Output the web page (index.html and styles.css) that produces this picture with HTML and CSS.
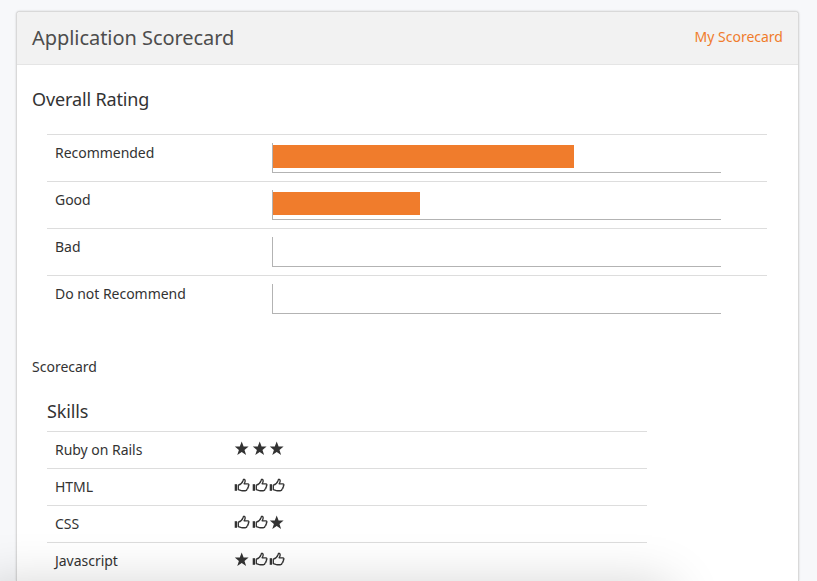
FILE: index.html
```html
<!DOCTYPE html>
<html lang="en">
<head>
<meta charset="utf-8">
<title>Application Scorecard</title>
<link rel="stylesheet" href="styles.css">
</head>
<body>
<svg width="0" height="0" class="defs">
  <symbol id="star" viewBox="0 0 16 16"><path d="M7.7.6l1.9 5h5l-4.1 3.3 1.6 5.1-4.4-3-4.4 3 1.6-5.1L.8 5.6h5z" fill="#333"/></symbol>
  <symbol id="thumb" viewBox="0 0 16 16"><path d="M.7 6.2h2.3v6.6H.7z" fill="#333"/><path d="M4.3 7.1C6.6 6.5 8.4 4.6 9 2.7c.2-1 .6-1.5 1.3-1.4 1.3.3 1.1 2.6-.2 4.5h3.5c1.6 0 1.6 1.7.7 2.1.5.5.2 1.3-.5 1.6.3.7-.1 1.4-.8 1.6 0 1-.7 1.6-1.7 1.6H8.4c-1.6 0-2.6-.7-4.1-1z" fill="none" stroke="#333" stroke-width="1.35" stroke-linejoin="round"/></symbol>
</svg>
<main class="card">
  <header class="card-header"><h1>Application Scorecard</h1><a class="link">My Scorecard</a></header>
  <h2 class="rating-title">Overall Rating</h2>
  <section class="ratings">
    <div class="rating"><span class="label">Recommended</span><div class="track"><div class="bar" style="width:301px"></div></div></div>
    <div class="rating"><span class="label">Good</span><div class="track"><div class="bar" style="width:147px"></div></div></div>
    <div class="rating"><span class="label">Bad</span><div class="track"></div></div>
    <div class="rating"><span class="label">Do not Recommend</span><div class="track"></div></div>
  </section>
  <p class="scorecard">Scorecard</p>
  <h2 class="skills-title">Skills</h2>
  <section class="skills">
    <div class="skill"><span class="name">Ruby on Rails</span><span class="icons"><svg><use href="#star"/></svg><svg><use href="#star"/></svg><svg><use href="#star"/></svg></span></div>
    <div class="skill"><span class="name">HTML</span><span class="icons"><svg><use href="#thumb"/></svg><svg><use href="#thumb"/></svg><svg><use href="#thumb"/></svg></span></div>
    <div class="skill"><span class="name">CSS</span><span class="icons"><svg><use href="#thumb"/></svg><svg><use href="#thumb"/></svg><svg><use href="#star"/></svg></span></div>
    <div class="skill"><span class="name">Javascript</span><span class="icons"><svg><use href="#star"/></svg><svg><use href="#thumb"/></svg><svg><use href="#thumb"/></svg></span></div>
  </section>
</main>
<div class="bottom-shadow"></div>
</body>
</html>
```
FILE: styles.css
```css
* { box-sizing: border-box; }
html { overflow: hidden; }
body { position: relative; margin: 0; padding: 11px 18px 0 16px; height: 581px; overflow: hidden; background: #f7f8fa; color: #333; font: 14px/20px "Noto Sans", sans-serif; letter-spacing: -.03px; }
h1, h2, p { margin: 0; font-weight: 400; }
.defs { position: absolute; }
.card { height: 570px; background: #fff; border: 1px solid #d9d9d9; border-bottom: 0; border-radius: 4px 4px 0 0; box-shadow: 0 0 2px rgba(0,0,0,.18); }
.card-header { height: 53px; padding: 0 15px; display: flex; justify-content: space-between; background: #f2f2f2; border-bottom: 1px solid #e5e5e5; border-radius: 3px 3px 0 0; }
h1 { color: #4d4d4d; font-size: 20px; line-height: 52px; letter-spacing: -.05px; }
.link { color: #f07c2c; line-height: 50px; letter-spacing: 0; }
h2 { font-size: 18px; line-height: 24px; letter-spacing: -.13px; }
.rating-title { margin: 22px 0 0 15px; }
.ratings { width: 720px; margin: 23px 0 0 30px; }
.rating { height: 47px; padding: 8px; display: flex; border-top: 1px solid #ddd; }
.label { width: 217px; }
.track { width: 448.5px; height: 30px; padding-top: 2px; border: solid #b3b3b3; border-width: 0 0 1px 1px; }
.bar { height: 23px; background: #f07c2c; }
.scorecard { margin: 35px 0 0 15px; letter-spacing: 0; }
.skills-title { margin: 22px 0 0 30px; }
.skills { width: 600px; margin: 8px 0 0 30px; }
.skill { height: 37px; padding: 8px; display: flex; border-top: 1px solid #ddd; }
.name { width: 179px; }
.icons { display: flex; gap: 1.7px; padding-top: 1px; }
.icons svg { width: 16px; height: 16px; }
.bottom-shadow { position: absolute; top: 586px; left: -20px; width: 690px; height: 200px; box-shadow: 0 0 50px rgba(0,0,0,.19); }
```
